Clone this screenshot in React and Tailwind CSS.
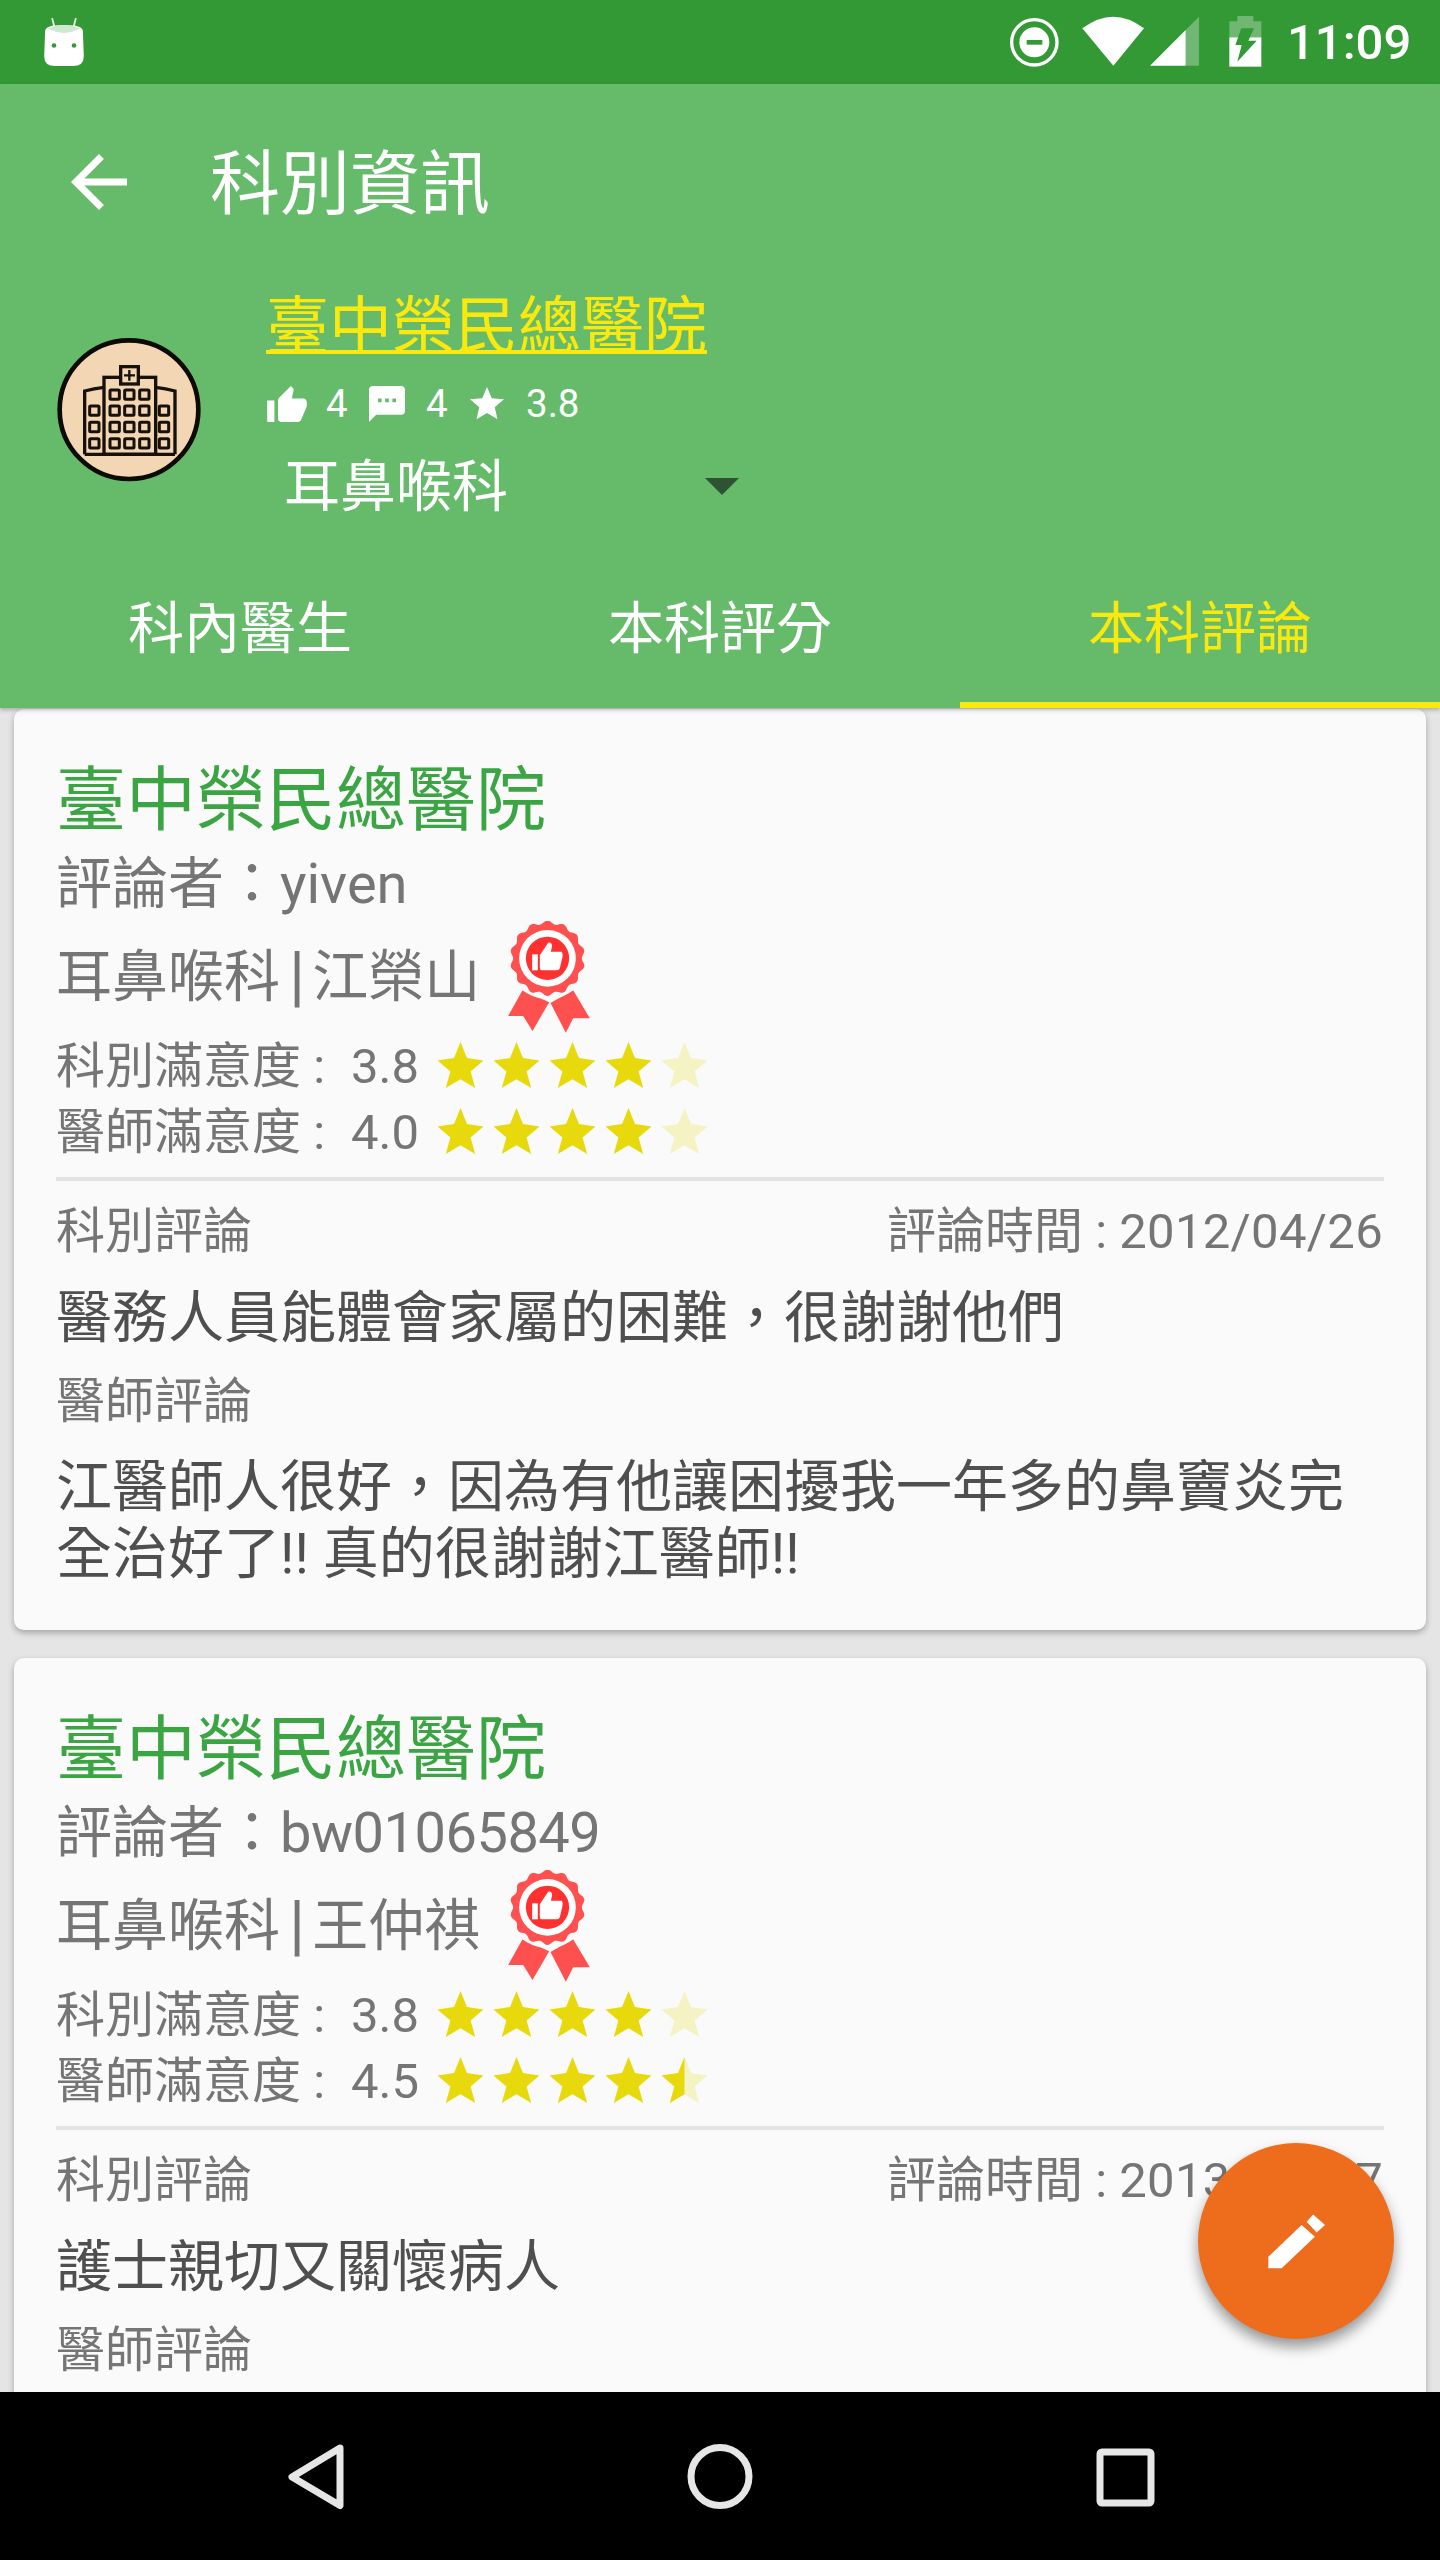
import React from "react";

const STAR = "50,0 64,35 100,40 72,64 82,100 50,81 18,100 28,64 0,40 36,35";

function Star({ kind, id }) {
  return (
    <svg width="47" height="46" viewBox="0 0 100 100" className="shrink-0">
      <polygon points={STAR} fill={kind === "empty" || kind === "half" ? "#f5f2c4" : "#e8d90c"} />
      {kind === "half" && (
        <>
          <clipPath id={id}>
            <rect x="0" y="0" width="50" height="100" />
          </clipPath>
          <polygon points={STAR} fill="#e8d90c" clipPath={`url(#${id})`} />
        </>
      )}
    </svg>
  );
}

function Rating({ label, value, last, id }) {
  return (
    <div className="flex items-center h-[66px] text-[49px] text-[#757575]">
      <span className="w-[295px] shrink-0 leading-none whitespace-pre">{label}</span>
      <span className="w-[87px] shrink-0 leading-none">{value}</span>
      <div className="flex gap-[9px] -mt-[2px] -ml-[1px]">
        <Star kind="full" />
        <Star kind="full" />
        <Star kind="full" />
        <Star kind="full" />
        <Star kind={last} id={id} />
      </div>
    </div>
  );
}

function scallop() {
  const pts = [];
  for (let i = 0; i < 168; i++) {
    const t = (i / 168) * Math.PI * 2;
    const r = 108 + 5 * Math.cos(14 * t);
    pts.push(`${(203 + r * Math.sin(t)).toFixed(1)},${(172 - r * Math.cos(t)).toFixed(1)}`);
  }
  return pts.join(" ");
}

function Badge() {
  return (
    <svg width="82" height="112" viewBox="85 60 245 336" className="ml-[28px] shrink-0">
      <polygon points="128,268 208,304 158,390 130,345 85,345" fill="#ff5050" />
      <polygon points="280,268 212,306 258,395 280,352 330,352" fill="#ff5050" />
      <path d="M125 262 Q170 295 205 288 Q240 295 282 262" fill="none" stroke="#fafafa" strokeWidth="7" />
      <polygon points={scallop()} fill="#ff5050" />
      <circle cx="203" cy="172" r="85" fill="#ffffff" />
      <circle cx="203" cy="172" r="65" fill="#ff3030" />
      <rect x="157" y="160" width="17" height="48" fill="#ffffff" />
      <path d="M180 163 L205 125 Q216 122 217 136 L213 152 L246 152 Q250 158 248 168 L240 202 Q238 208 230 208 L186 208 Q180 208 180 200 Z" fill="#ffffff" />
    </svg>
  );
}

function Card({ reviewer, reviewerClass, doctor, r1, r2, date, comment, docComment, rid, extra }) {
  return (
    <div className="bg-[#fafafa] rounded-[10px] shadow-[0_3px_6px_rgba(0,0,0,0.28)] pt-[52px] px-[42px] pb-[42px]">
      <div className="h-[79px] flex items-center text-[70px] leading-none text-[#3ba544]">臺中榮民總醫院</div>
      <div className="h-[87px] flex items-center text-[56px] leading-none text-[#757575]">
        <span>評論者：</span>
        <span className={reviewerClass}>{reviewer}</span>
      </div>
      <div className="h-[100px] flex items-center text-[56px] leading-none text-[#757575] mb-[6px]">
        <span>耳鼻喉科</span>
        <span className="ml-[9px] mr-[7px] text-[66px]">|</span>
        <span>{doctor}</span>
        <Badge />
      </div>
      <Rating label="科別滿意度 :" value={r1} last="empty" />
      <Rating label="醫師滿意度 :" value={r2[0]} last={r2[1]} id={rid} />
      <div className="h-[4px] bg-[#e3e3e3] mt-[12px]" />
      <div className="h-[97px] pt-[3px] flex items-center justify-between text-[49px] leading-none text-[#757575]">
        <span>科別評論</span>
        <span className="mr-[1px]">
          評論時間 : <span className="tracking-[0.3px]">{date}</span>
        </span>
      </div>
      <div className="h-[80px] flex items-center text-[56px] leading-none text-[#4f4f4f]">{comment}</div>
      <div className="h-[86px] flex items-center text-[49px] leading-none text-[#757575]">醫師評論</div>
      {docComment && <div className="mt-[10px] text-[56px] leading-[67px] text-[#4f4f4f]">{docComment}</div>}
      {extra && <div className="h-[160px]" />}
    </div>
  );
}

function StatusIcons() {
  return (
    <svg width="280" height="84" viewBox="0 0 840 252" className="shrink-0">
      <circle cx="103" cy="127" r="68" fill="none" stroke="#fff" strokeWidth="10" />
      <circle cx="103" cy="127" r="45" fill="#fff" />
      <rect x="80" y="120" width="47" height="14" fill="#329935" />
      <path d="M247 85 Q340 15 432 85 L340 197 Z" fill="#fff" />
      <polygon points="450,197 557,90 557,197" fill="#fff" />
      <polygon points="557,90 597,50 597,197 557,197" fill="#fff" fillOpacity="0.3" />
      <path d="M712 48 H760 V64 H784 V112 H688 V64 H712 Z" fill="#fff" fillOpacity="0.3" />
      <rect x="688" y="112" width="96" height="88" fill="#fff" />
      <polygon points="724,85 762,85 745,122 770,122 712,185 725,135 706,135" fill="#329935" />
    </svg>
  );
}

function Building() {
  const center = [227, 271, 316];
  const rows = [224, 272, 321, 370];
  const sideRows = [272, 321, 370];
  return (
    <svg width="180" height="180" viewBox="0 0 540 540" className="shrink-0 -mx-[18px]">
      <circle cx="270" cy="269" r="208" fill="#f3d7b5" stroke="#0c0a06" strokeWidth="14" />
      <g fill="none" stroke="#17110a" strokeWidth="10">
        <path d="M137 403 V213 Q165 205 195 202" />
        <path d="M350 202 Q380 205 408 213 V403" />
        <path d="M137 403 H408" />
        <rect x="195" y="172" width="155" height="231" />
        <rect x="245" y="140" width="53" height="52" fill="#f3d7b5" />
        <path d="M271 150 V182 M255 166 H288" strokeWidth="7" />
        {center.map((x) =>
          rows.map((y) => <rect key={`${x}-${y}`} x={x - 14} y={y - 14} width="28" height="28" rx="3" strokeWidth="9" />)
        )}
        {[166, 375].map((x) =>
          sideRows.map((y) => <rect key={`${x}-${y}`} x={x - 14} y={y - 14} width="28" height="28" rx="3" strokeWidth="9" />)
        )}
      </g>
    </svg>
  );
}

export default function App() {
  return (
    <div className="relative w-[1440px] h-[2560px] overflow-hidden flex flex-col bg-[#e5e5e5] font-[Roboto,'Noto_Sans_CJK_TC',sans-serif]">
      {/* status bar */}
      <div className="h-[84px] shrink-0 bg-[#329935] flex items-center justify-between">
        <svg width="40" height="48" viewBox="0 0 85 103" className="ml-[44px] shrink-0">
          <path d="M17 0 L22 20 M68 0 L63 20" stroke="#fff" strokeWidth="4" opacity="0.85" />
          <path d="M2 28 Q2 15 42 15 Q83 15 83 28 L85 82 Q85 103 62 103 L23 103 Q0 103 0 82 Z" fill="#fff" />
          <path d="M8 22 Q42 8 77 22 Q42 42 8 22 Z" fill="#cfe8d2" />
          <circle cx="21" cy="59" r="5" fill="#329935" />
          <circle cx="64" cy="59" r="5" fill="#329935" />
        </svg>
        <div className="flex items-center mr-[20px]">
          <StatusIcons />
          <span className="ml-[7px] w-[133px] text-[49px] font-medium leading-none text-white">11:09</span>
        </div>
      </div>

      {/* header */}
      <div className="h-[624px] shrink-0 bg-[#66bb6a] relative z-10 shadow-[0_2px_4px_rgba(0,0,0,0.25)] flex flex-col">
        <div className="h-[196px] flex items-center pl-[57px] shrink-0">
          <svg width="84" height="84" viewBox="0 0 24 24" fill="#fff" className="shrink-0">
            <path d="M20 11H7.83l5.59-5.59L12 4l-8 8 8 8 1.41-1.41L7.83 13H20v-2z" />
          </svg>
          <span className="ml-[69px] mt-[6px] text-[70px] leading-none text-white">科別資訊</span>
        </div>
        <div className="h-[260px] flex items-center pl-[57px] shrink-0">
          <Building />
          <div className="ml-[65px] h-[260px] flex flex-col">
            <div className="h-[96px] flex items-end pb-[18px] text-[63px] leading-none text-[#f9e90f] underline decoration-[3.5px] underline-offset-[2px]">
              臺中榮民總醫院
            </div>
            <div className="h-[56px] flex items-center text-[38.5px] leading-none text-white">
              <svg width="40" height="36" viewBox="1 1 22 20" fill="#fff" className="shrink-0 ml-[1px]">
                <path d="M1 21h4V9H1v12zm22-11c0-1.1-.9-2-2-2h-6.31l.95-4.57.03-.32c0-.41-.17-.79-.44-1.06L14.17 1 7.59 7.59C7.22 7.95 7 8.45 7 9v10c0 1.1.9 2 2 2h9c.83 0 1.54-.5 1.84-1.22l3.02-7.05c.09-.23.14-.47.14-.73v-1.91l-.01-.01L23 10z" />
              </svg>
              <span className="ml-[19px] w-[43px]">4</span>
              <svg width="36" height="36" viewBox="2 2 20 20" fill="#fff" className="shrink-0">
                <path d="M20 2H4c-1.1 0-1.99.9-1.99 2L2 22l4-4h14c1.1 0 2-.9 2-2V4c0-1.1-.9-2-2-2zM9 11H7V9h2v2zm4 0h-2V9h2v2zm4 0h-2V9h2v2z" />
              </svg>
              <span className="ml-[21px] w-[44px]">4</span>
              <svg width="34" height="34" viewBox="2 2 20 20" fill="#fff" className="shrink-0">
                <path d="M12 17.27L18.18 21l-1.64-7.03L22 9.24l-7.19-.61L12 2 9.19 8.63 2 9.24l5.46 4.73L5.82 21z" />
              </svg>
              <span className="ml-[22px]">3.8</span>
            </div>
            <div className="h-[84px] mt-[13px] flex items-center pl-[18px] text-[56px] leading-none text-white">
              耳鼻喉科
              <span className="ml-[197px] mb-[2px] w-0 h-0 border-l-[17px] border-r-[17px] border-t-[17px] border-l-transparent border-r-transparent border-t-[#2e5232]" />
            </div>
          </div>
        </div>
        <div className="h-[168px] grid grid-cols-3 shrink-0 text-[56px] leading-none text-white">
          <div className="flex items-center justify-center pt-[10px]">科內醫生</div>
          <div className="flex items-center justify-center pt-[10px]">本科評分</div>
          <div className="flex items-center justify-center text-[#f9e90f] border-b-[6px] border-[#f9e90f] pt-[16px]">本科評論</div>
        </div>
      </div>

      {/* list */}
      <div className="flex-1 min-h-0 overflow-hidden px-[14px] pt-[1px] flex flex-col gap-[28px]">
        <Card
          reviewer="yiven"
          doctor="江榮山"
          r1="3.8"
          r2={["4.0", "empty"]}
          date="2012/04/26"
          comment="醫務人員能體會家屬的困難，很謝謝他們"
          docComment="江醫師人很好，因為有他讓困擾我一年多的鼻竇炎完全治好了!! 真的很謝謝江醫師!!"
          rid="h1"
        />
        <Card
          reviewer="bw01065849"
          reviewerClass="tracking-[-0.5px]"
          doctor="王仲祺"
          r1="3.8"
          r2={["4.5", "half"]}
          date="2013/12/27"
          comment="護士親切又關懷病人"
          rid="h2"
          extra
        />
      </div>

      {/* nav bar */}
      <div className="h-[168px] shrink-0 bg-black relative z-20 flex items-start">
        <svg width="1440" height="168" viewBox="0 0 1440 168" className="shrink-0">
          <path d="M340 56 L292 85 L340 113.5 Z" fill="none" stroke="#e6e6e6" strokeWidth="7" strokeLinejoin="round" />
          <circle cx="720" cy="84.5" r="29" fill="none" stroke="#e6e6e6" strokeWidth="7" />
          <rect x="1100" y="60" width="51" height="51" rx="2" fill="none" stroke="#e6e6e6" strokeWidth="7" />
        </svg>
      </div>

      {/* FAB */}
      <div className="absolute z-30 right-[46px] bottom-[221px] w-[196px] h-[196px] rounded-full bg-[#ed6d1d] shadow-[0_8px_14px_rgba(0,0,0,0.4)] flex items-center justify-center">
        <svg width="84" height="84" viewBox="0 0 24 24" fill="#fff">
          <polygon points="4.1,16.5 13.6,7.4 17.4,10.8 7.9,19.8 4.1,19.8" />
          <polygon points="15.05,6.5 16.9,4.4 20.3,7.4 17.9,9.6" />
        </svg>
      </div>
    </div>
  );
}
